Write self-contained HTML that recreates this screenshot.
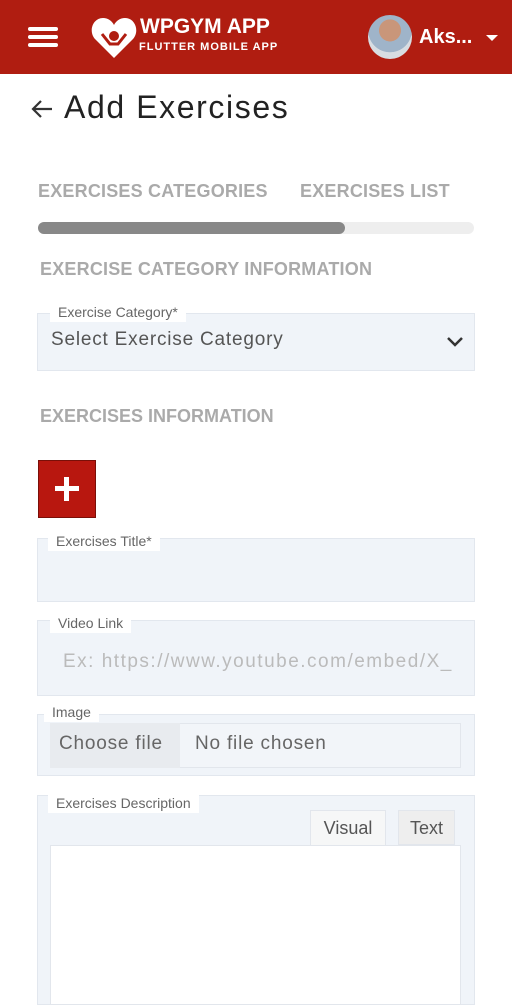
<!DOCTYPE html>
<html><head><meta charset="utf-8"><style>
*{margin:0;padding:0;box-sizing:border-box}
body{width:512px;height:995px;overflow:hidden;background:#fff;font-family:"Liberation Sans",sans-serif;position:relative}
.a{position:absolute;white-space:nowrap}
.hdr{left:0;top:0;width:512px;height:74px;background:#b01d11}
.box{background:#f0f4f9;border:1px solid #e2e7ee}
.lbl{background:#fff;color:#666;font-size:14px;padding:0 8px;line-height:19px}
.sec{color:#aaa;font-size:18px;font-weight:bold}
</style></head><body>
<div class="a hdr"></div>
<div class="a" style="left:28px;top:27px;width:30px;height:4px;background:#fff;border-radius:2px"></div>
<div class="a" style="left:28px;top:35px;width:30px;height:4px;background:#fff;border-radius:2px"></div>
<div class="a" style="left:28px;top:43px;width:30px;height:4px;background:#fff;border-radius:2px"></div>
<svg class="a" style="left:90px;top:14px" width="48" height="46" viewBox="0 0 48 46"><path d="M24 44 L5 25 C-2 17 3 4 13 4 C18 4 22 7 24 11 C26 7 30 4 35 4 C45 4 50 17 43 25 Z" fill="#fff"/><circle cx="24" cy="22" r="5" fill="#b01d11"/><path d="M12 20 L20 30 L28 30 L36 20" stroke="#b01d11" stroke-width="3" fill="none"/></svg>
<div class="a" style="left:140px;top:15px;color:#fff;font-size:21px;font-weight:bold">WPGYM APP</div>
<div class="a" style="left:139px;top:41px;color:#fff;font-size:11px;font-weight:bold;letter-spacing:1px">FLUTTER MOBILE APP</div>
<div class="a" style="left:368px;top:15px;width:44px;height:44px;border-radius:50%;background:radial-gradient(circle at 50% 35%,#c9967a 0 30%,#9fb4c9 31% 60%,#d8dde2 61%)"></div>
<div class="a" style="left:419px;top:26px;color:#fff;font-size:20px;font-weight:bold">Aks...</div>
<div class="a" style="left:486px;top:35px;width:0;height:0;border-left:6px solid transparent;border-right:6px solid transparent;border-top:6px solid #fff"></div>
<svg class="a" style="left:30px;top:98px" width="24" height="22"><path d="M22 11 H3 M11 3 L3 11 L11 19" stroke="#333" stroke-width="2.2" fill="none"/></svg>
<div class="a" style="left:64px;top:89px;font-size:32px;color:#222;letter-spacing:1.6px">Add Exercises</div>
<div class="a sec" style="left:38px;top:181px;font-size:18px;letter-spacing:0.2px">EXERCISES CATEGORIES</div>
<div class="a sec" style="left:300px;top:181px;font-size:18px;letter-spacing:0.2px">EXERCISES LIST</div>
<div class="a" style="left:38px;top:222px;width:436px;height:12px;background:#eee;border-radius:6px"></div>
<div class="a" style="left:38px;top:222px;width:307px;height:12px;background:#888;border-radius:6px"></div>
<div class="a sec" style="left:40px;top:259px;letter-spacing:0.2px">EXERCISE CATEGORY INFORMATION</div>
<div class="a box" style="left:37px;top:313px;width:438px;height:58px"></div>
<div class="a lbl" style="left:50px;top:303px">Exercise Category*</div>
<div class="a" style="left:51px;top:329px;font-size:19px;color:#555;letter-spacing:0.8px">Select Exercise Category</div>
<svg class="a" style="left:446px;top:336px" width="18" height="12"><path d="M2 2 L9 9 L16 2" stroke="#333" stroke-width="2.5" fill="none"/></svg>
<div class="a sec" style="left:40px;top:406px">EXERCISES INFORMATION</div>
<div class="a" style="left:38px;top:460px;width:58px;height:58px;background:#b8170f;border:1px solid #7a0f08"></div>
<div class="a" style="left:55px;top:486px;width:24px;height:5px;background:#fff"></div>
<div class="a" style="left:64px;top:477px;width:5px;height:24px;background:#fff"></div>
<div class="a box" style="left:37px;top:538px;width:438px;height:64px"></div>
<div class="a lbl" style="left:48px;top:532px">Exercises Title*</div>
<div class="a box" style="left:37px;top:620px;width:438px;height:76px"></div>
<div class="a lbl" style="left:50px;top:614px">Video Link</div>
<div class="a" style="left:63px;top:651px;font-size:19px;color:#bbb;letter-spacing:1.5px">Ex: https://www.youtube.com/embed/X_</div>
<div class="a box" style="left:37px;top:714px;width:438px;height:62px"></div>
<div class="a lbl" style="left:44px;top:703px">Image</div>
<div class="a" style="left:50px;top:723px;width:411px;height:45px;border:1px solid #e2e6ec;background:#f2f5f9"></div>
<div class="a" style="left:50px;top:723px;width:130px;height:45px;background:#e8ebef"></div>
<div class="a" style="left:59px;top:733px;font-size:19px;color:#666;letter-spacing:0.8px">Choose file</div>
<div class="a" style="left:195px;top:733px;font-size:19px;color:#666;letter-spacing:0.8px">No file chosen</div>
<div class="a box" style="left:37px;top:795px;width:438px;height:210px"></div>
<div class="a lbl" style="left:48px;top:794px">Exercises Description</div>
<div class="a" style="left:310px;top:810px;width:76px;height:36px;background:#f6f7f7;border:1px solid #e2e6ec;border-bottom:none;font-size:18px;color:#555;text-align:center;line-height:34px">Visual</div>
<div class="a" style="left:398px;top:810px;width:57px;height:35px;background:#eee;border:1px solid #e2e6ec;font-size:18px;color:#555;text-align:center;line-height:34px">Text</div>
<div class="a" style="left:50px;top:845px;width:411px;height:160px;background:#fff;border:1px solid #e2e6ec"></div>
</body></html>
